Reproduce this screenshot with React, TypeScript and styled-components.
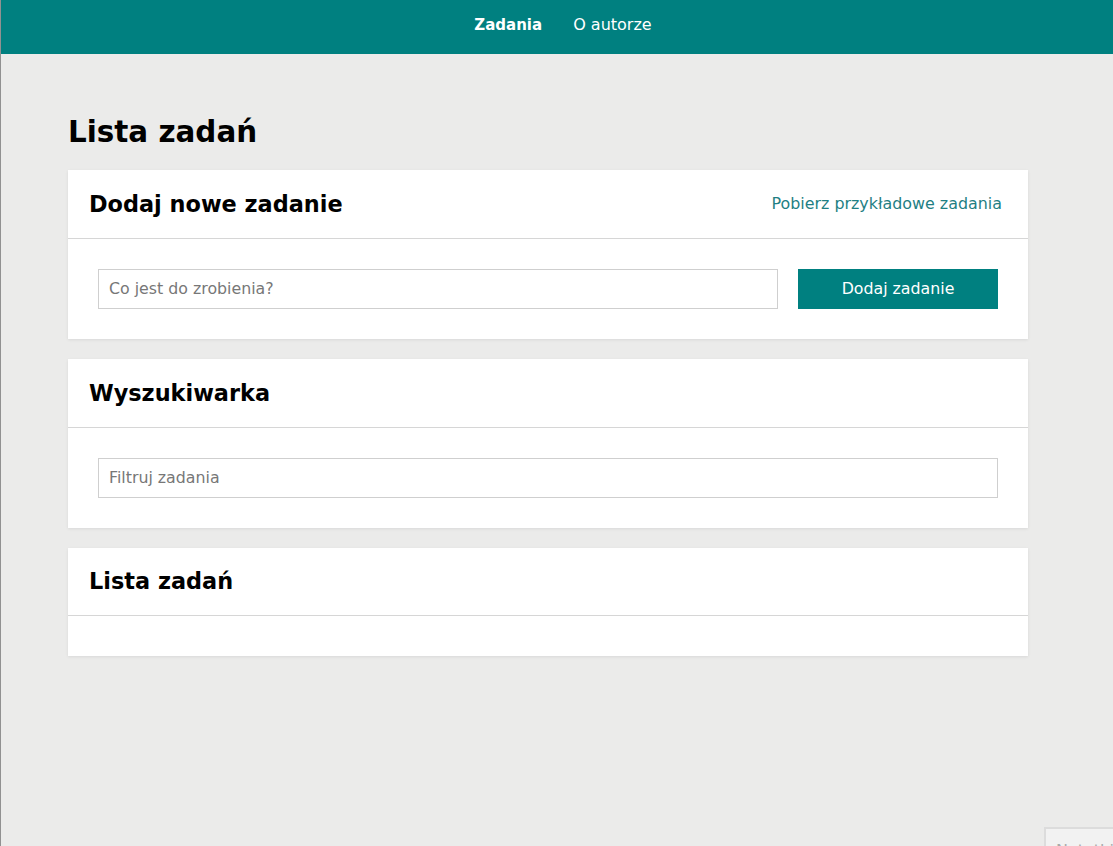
import React from "react";
import styled, { createGlobalStyle } from "styled-components";

const GlobalStyle = createGlobalStyle`
  html, body { margin: 0; padding: 0; }
  body {
    background: #ebebea;
    font-family: "DejaVu Sans", "Liberation Sans", sans-serif;
    color: #000;
  }
  * { box-sizing: border-box; }
`;

const Page = styled.div`
  min-height: 100vh;
  border-left: 1px solid rgba(0, 0, 0, 0.38);
`;

const TopBar = styled.header`
  height: 54px;
  background: #008080;
  display: flex;
  justify-content: center;
  align-items: flex-start;
  padding: 15px 0 0 12px;
  gap: 31px;
`;

const NavLink = styled.a<{ $active?: boolean }>`
  color: #fff;
  text-decoration: none;
  font-size: ${(p) => (p.$active ? "15px" : "16px")};
  font-weight: ${(p) => (p.$active ? 700 : 400)};
  line-height: 20px;
  cursor: pointer;
`;

const Main = styled.main`
  width: 960px;
  margin: 0 0 0 67px;
  padding-bottom: 40px;
`;

const PageTitle = styled.h1`
  margin: 60px 0 20px;
  font-size: 29.4px;
  line-height: 36px;
  font-weight: 700;
`;

const Cards = styled.div`
  display: flex;
  flex-direction: column;
  gap: 20px;
`;

const Card = styled.section`
  background: #fff;
  box-shadow: 0 1px 3px rgba(0, 0, 0, 0.08);
`;

const CardHeader = styled.div<{ $short?: boolean }>`
  height: ${(p) => (p.$short ? "68px" : "69px")};
  border-bottom: 1px solid #d6d6d6;
  display: flex;
  align-items: center;
  justify-content: space-between;
  padding: 0 26px 0 21px;
`;

const CardTitle = styled.h2`
  margin: 0 0 1px;
  font-size: 22.4px;
  line-height: 28px;
  font-weight: 700;
`;

const HeaderLink = styled.a`
  color: #1f7f84;
  font-size: 15.9px;
  line-height: 20px;
  text-decoration: none;
  cursor: pointer;
`;

const CardBody = styled.div<{ $empty?: boolean }>`
  padding: ${(p) => (p.$empty ? "20px" : "30px")};
  display: flex;
  gap: 20px;
`;

const TextInput = styled.input`
  flex: 1;
  height: 40px;
  border: 1px solid #cfcfcf;
  padding: 0 10px 2px;
  font-family: inherit;
  font-size: 15.8px;
  color: #333;
  outline: none;
  &::placeholder {
    color: #777;
  }
`;

const AddButton = styled.button`
  width: 200px;
  height: 40px;
  border: none;
  background: #008080;
  color: #fff;
  font-family: inherit;
  font-size: 15.8px;
  padding: 0 0 2px;
  cursor: pointer;
`;

const CornerWidget = styled.div`
  position: fixed;
  left: 1044px;
  top: 827px;
  width: 200px;
  height: 80px;
  background: #f2f2f2;
  border: 2px solid #dcdcdc;
  padding: 12px 10px;
  color: #aaa;
  font-size: 16px;
`;

export default function App() {
  return (
    <>
      <GlobalStyle />
      <Page>
        <TopBar>
          <NavLink $active>Zadania</NavLink>
          <NavLink>O autorze</NavLink>
        </TopBar>
        <Main>
          <PageTitle>Lista zadań</PageTitle>
          <Cards>
            <Card>
              <CardHeader>
                <CardTitle>Dodaj nowe zadanie</CardTitle>
                <HeaderLink>Pobierz przykładowe zadania</HeaderLink>
              </CardHeader>
              <CardBody>
                <TextInput placeholder="Co jest do zrobienia?" />
                <AddButton>Dodaj zadanie</AddButton>
              </CardBody>
            </Card>
            <Card>
              <CardHeader>
                <CardTitle>Wyszukiwarka</CardTitle>
              </CardHeader>
              <CardBody>
                <TextInput placeholder="Filtruj zadania" />
              </CardBody>
            </Card>
            <Card>
              <CardHeader $short>
                <CardTitle>Lista zadań</CardTitle>
              </CardHeader>
              <CardBody $empty />
            </Card>
          </Cards>
        </Main>
      </Page>
      <CornerWidget>Notatki</CornerWidget>
    </>
  );
}
